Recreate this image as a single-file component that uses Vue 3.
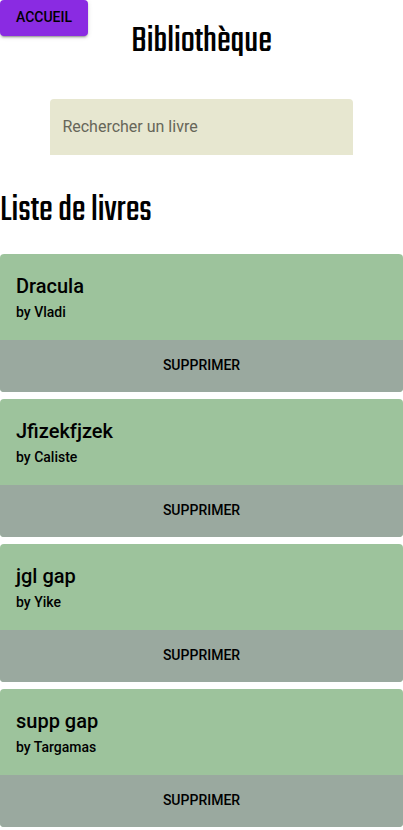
<script setup>
import { computed, ref } from 'vue'

const search = ref('')
const books = ref([
  { id: 1, title: 'Dracula', author: 'Vladi' },
  { id: 2, title: 'Jfizekfjzek', author: 'Caliste' },
  { id: 3, title: 'jgl gap', author: 'Yike' },
  { id: 4, title: 'supp gap', author: 'Targamas' },
])

const visibleBooks = computed(() =>
  books.value.filter((book) => book.title.toLowerCase().includes(search.value.toLowerCase())),
)

function removeBook(id) {
  books.value = books.value.filter((book) => book.id !== id)
}
</script>

<template>
  <div class="page">
    <header class="header">
      <a class="home" href="#">ACCUEIL</a>
      <h1 class="heading">Bibliothèque</h1>
    </header>
    <main>
      <input
        v-model="search"
        class="search"
        type="text"
        aria-label="Rechercher un livre"
        placeholder="Rechercher un livre"
      />
      <h2 class="heading">Liste de livres</h2>
      <ul class="books">
        <li v-for="book in visibleBooks" :key="book.id" class="card">
          <div class="info">
            <h3 class="title">{{ book.title }}</h3>
            <p class="author">by {{ book.author }}</p>
          </div>
          <button class="remove" type="button" @click="removeBook(book.id)">SUPPRIMER</button>
        </li>
      </ul>
    </main>
  </div>
</template>

<style>
body {
  margin: 0;
  background: #fff;
}
</style>

<style scoped>
.page {
  color: #000;
  font-family: Roboto, sans-serif;
}

.header {
  position: relative;
  padding: 18px 0 14px;
  text-align: center;
}

.home {
  position: absolute;
  top: 0;
  left: 0;
  padding: 0 16px 2px;
  border-radius: 4px;
  background: #8a2be2;
  box-shadow:
    0 3px 1px -2px rgba(0, 0, 0, 0.2),
    0 2px 2px 0 rgba(0, 0, 0, 0.14),
    0 1px 5px 0 rgba(0, 0, 0, 0.12);
  color: #000;
  font-size: 14px;
  font-weight: 500;
  line-height: 34px;
  text-decoration: none;
}

.heading {
  margin: 0;
  font-family: Teko, "Liberation Sans Narrow", "Roboto Condensed", sans-serif;
  font-size: 38px;
  font-weight: 400;
  line-height: 48px;
}

.search {
  display: block;
  box-sizing: border-box;
  width: 75%;
  height: 56px;
  margin: 19px auto 32px;
  padding: 0 12px 2px;
  border: 0;
  border-radius: 4px 4px 0 0;
  background: #e7e7d0;
  color: #000;
  font: 400 16px/24px Roboto, sans-serif;
}

.search::placeholder {
  color: #666659;
  opacity: 1;
}

.books {
  display: grid;
  gap: 7px;
  margin: 19px 0 0;
  padding: 0 0 3px;
  list-style: none;
}

.card {
  overflow: hidden;
  border-radius: 4px;
  background: #9dc39c;
}

.info {
  padding: 16px 16px 18px;
}

.title {
  margin: 0;
  font-size: 20px;
  font-weight: 500;
  line-height: 32px;
}

.author {
  margin: 0;
  font-size: 14px;
  font-weight: 500;
  line-height: 20px;
}

.remove {
  display: block;
  width: 100%;
  padding: 0 0 2px;
  border: 0;
  background: #9aa99f;
  color: #000;
  font: 500 14px/50px Roboto, sans-serif;
  cursor: pointer;
}
</style>
